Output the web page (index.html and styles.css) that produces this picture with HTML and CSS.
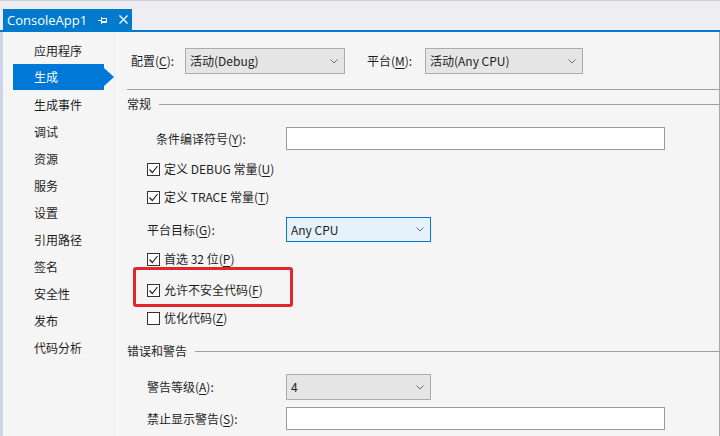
FILE: index.html
```html
<!DOCTYPE html>
<html lang="zh-CN">
<head>
  <meta charset="UTF-8">
  <title>ConsoleApp1 - 生成</title>
  <link rel="stylesheet" href="styles.css">
</head>
<body>
  <div class="doc-tabs">
    <div class="tab">
      <span class="tab-title">ConsoleApp1</span>
      <svg class="pin" width="10" height="8" viewBox="0 0 10 8">
        <path d="M0 4.5H3M3.5 1V8M3.5 2.5H8.5V6.5H3.5M3.5 5.5H8.5" stroke="#fff" stroke-width="1" fill="none"/>
      </svg>
      <svg class="close" width="9" height="9" viewBox="0 0 9 9">
        <path d="M0.5 0.5L8.5 8.5M8.5 0.5L0.5 8.5" stroke="#fff" stroke-width="1.4"/>
      </svg>
    </div>
  </div>

  <div class="main">
    <nav class="side">
      <div class="side-item">应用程序</div>
      <div class="side-item active">生成</div>
      <div class="side-item">生成事件</div>
      <div class="side-item">调试</div>
      <div class="side-item">资源</div>
      <div class="side-item">服务</div>
      <div class="side-item">设置</div>
      <div class="side-item">引用路径</div>
      <div class="side-item">签名</div>
      <div class="side-item">安全性</div>
      <div class="side-item">发布</div>
      <div class="side-item">代码分析</div>
    </nav>

    <section class="page">
      <div class="config-row">
        <span class="config-label">配置(<u>C</u>):</span>
        <div class="combo combo-config">活动(Debug)<svg class="chev" width="8" height="5" viewBox="0 0 8 5"><path d="M0.5 0.5L4 4L7.5 0.5" stroke="#707070" fill="none"/></svg></div>
        <span class="config-label platform-label">平台(<u>M</u>):</span>
        <div class="combo combo-platform">活动(Any CPU)<svg class="chev" width="8" height="5" viewBox="0 0 8 5"><path d="M0.5 0.5L4 4L7.5 0.5" stroke="#707070" fill="none"/></svg></div>
      </div>

      <div class="rule"></div>

      <div class="group group-general">常规</div>

      <div class="field field-cond">
        <span class="field-label indent">条件编译符号(<u>Y</u>):</span>
        <div class="textbox"></div>
      </div>

      <div class="check check-debug">
        <span class="box checked"><svg width="11" height="11" viewBox="0 0 11 11"><path d="M1.5 5.5L4.3 8.5L9.5 2" stroke="#222" stroke-width="1.2" fill="none"/></svg></span>
        <span>定义 DEBUG 常量(<u>U</u>)</span>
      </div>

      <div class="check check-trace">
        <span class="box checked"><svg width="11" height="11" viewBox="0 0 11 11"><path d="M1.5 5.5L4.3 8.5L9.5 2" stroke="#222" stroke-width="1.2" fill="none"/></svg></span>
        <span>定义 TRACE 常量(<u>T</u>)</span>
      </div>

      <div class="field field-target">
        <span class="field-label">平台目标(<u>G</u>):</span>
        <div class="combo combo-small combo-hot">Any CPU<svg class="chev" width="8" height="5" viewBox="0 0 8 5"><path d="M0.5 0.5L4 4L7.5 0.5" stroke="#707070" fill="none"/></svg></div>
      </div>

      <div class="check check-prefer">
        <span class="box checked"><svg width="11" height="11" viewBox="0 0 11 11"><path d="M1.5 5.5L4.3 8.5L9.5 2" stroke="#222" stroke-width="1.2" fill="none"/></svg></span>
        <span>首选 32 位(<u>P</u>)</span>
      </div>

      <div class="check check-unsafe">
        <span class="box checked"><svg width="11" height="11" viewBox="0 0 11 11"><path d="M1.5 5.5L4.3 8.5L9.5 2" stroke="#222" stroke-width="1.2" fill="none"/></svg></span>
        <span>允许不安全代码(<u>F</u>)</span>
        <span class="highlight"></span>
      </div>

      <div class="check check-optimize">
        <span class="box"></span>
        <span>优化代码(<u>Z</u>)</span>
      </div>

      <div class="group group-errors">错误和警告</div>

      <div class="field field-level">
        <span class="field-label">警告等级(<u>A</u>):</span>
        <div class="combo combo-small">4<svg class="chev" width="8" height="5" viewBox="0 0 8 5"><path d="M0.5 0.5L4 4L7.5 0.5" stroke="#707070" fill="none"/></svg></div>
      </div>

      <div class="field field-suppress">
        <span class="field-label">禁止显示警告(<u>S</u>):</span>
        <div class="textbox"></div>
      </div>
    </section>
  </div>
</body>
</html>
```

FILE: styles.css
```css
body {
  margin: 0;
  width: 720px;
  height: 436px;
  overflow: hidden;
  background: #eeeef2;
  font-family: "Noto Sans CJK SC", sans-serif;
  font-size: 12px;
  line-height: 16px;
  color: #1e1e1e;
}

u { text-underline-offset: 2px; }

/* document tab strip */
.doc-tabs {
  height: 32px;
  box-sizing: border-box;
  border-top: 1px solid #cfd1da;
  border-bottom: 2px solid #007acc;
  padding: 8px 0 0 3px;
  display: flex;
  align-items: flex-end;
}

.tab {
  width: 129px;
  height: 21px;
  background: #007acc;
  color: #fff;
  display: flex;
  align-items: center;
  padding-left: 4px;
  box-sizing: border-box;
  font-family: "Open Sans", sans-serif;
  font-size: 13px;
}

.tab-title { width: 91px; }
.pin { margin-right: 11px; }

/* body */
.main {
  display: flex;
  height: 404px;
  border-left: 3px solid #ccd4ea;
}

.side {
  width: 112px;
  background: #f5f5f5;
  border-right: 1px solid #ececec;
  padding-top: 5px;
  box-sizing: border-box;
}

.side-item {
  height: 27px;
  line-height: 27px;
  padding-left: 21px;
  margin-left: 10px;
  width: 91px;
  box-sizing: border-box;
  position: relative;
}

.side-item.active {
  background: #0078d7;
  color: #fff;
  height: 26px;
  line-height: 26px;
  margin-bottom: 1px;
}

.side-item.active::after {
  content: "";
  position: absolute;
  right: -10px;
  top: 4px;
  border-left: 10px solid #0078d7;
  border-top: 9px solid transparent;
  border-bottom: 9px solid transparent;
}

.page {
  flex: 1;
  background: #f5f5f5;
  border-right: 1px solid #a8a8a8;
  padding-left: 12px;
}

/* config / platform row */
.config-row {
  display: flex;
  align-items: center;
  height: 26px;
  margin-top: 16px;
  padding-left: 4px;
}

.config-label { width: 54px; }
.platform-label { margin-left: 22px; width: 58px; }

.combo {
  height: 26px;
  box-sizing: border-box;
  background: #e5e5e5;
  border: 1px solid #acacac;
  padding: 0 6px 0 4px;
  display: flex;
  align-items: center;
  justify-content: space-between;
}

.combo-config { width: 160px; }
.combo-platform { width: 158px; }
.combo-small { width: 145px; }

.combo-hot {
  background: #e5f1fb;
  border-color: #0078d7;
  height: 25px;
}

.rule {
  margin-top: 15px;
  border-top: 1px solid #a0a0a0;
}

.group {
  height: 16px;
  display: flex;
  align-items: center;
}

.group::after {
  content: "";
  flex: 1;
  border-top: 1px solid #a0a0a0;
  margin-left: 8px;
}

.group-general { margin-top: 6px; }
.group-errors { margin-top: 15px; }

/* labelled fields */
.field {
  display: flex;
  align-items: center;
  padding-left: 20px;
}

.field-label { width: 139px; }
.field-label.indent { padding-left: 9px; box-sizing: border-box; }

.textbox {
  width: 379px;
  height: 23px;
  box-sizing: border-box;
  background: #fff;
  border: 1px solid #9a9a9a;
}

.field-cond { margin-top: 15px; }
.field-target { margin-top: 10px; }
.field-level { margin-top: 15px; }
.field-suppress { margin-top: 7px; }

/* checkboxes */
.check {
  display: flex;
  align-items: center;
  height: 20px;
  padding-left: 20px;
  position: relative;
}

.box {
  width: 13px;
  height: 13px;
  box-sizing: border-box;
  border: 1px solid #333;
  background: #fff;
  margin-right: 4px;
  display: flex;
}

.check-debug { margin-top: 9px; }
.check-trace { margin-top: 8px; }
.check-prefer { margin-top: 7px; }
.check-unsafe { margin-top: 11px; }
.check-optimize { margin-top: 8px; }

.highlight {
  position: absolute;
  left: 6px;
  top: -13px;
  width: 160px;
  height: 40px;
  box-sizing: border-box;
  border: 3px solid #e3262b;
  border-radius: 3px;
}
```
